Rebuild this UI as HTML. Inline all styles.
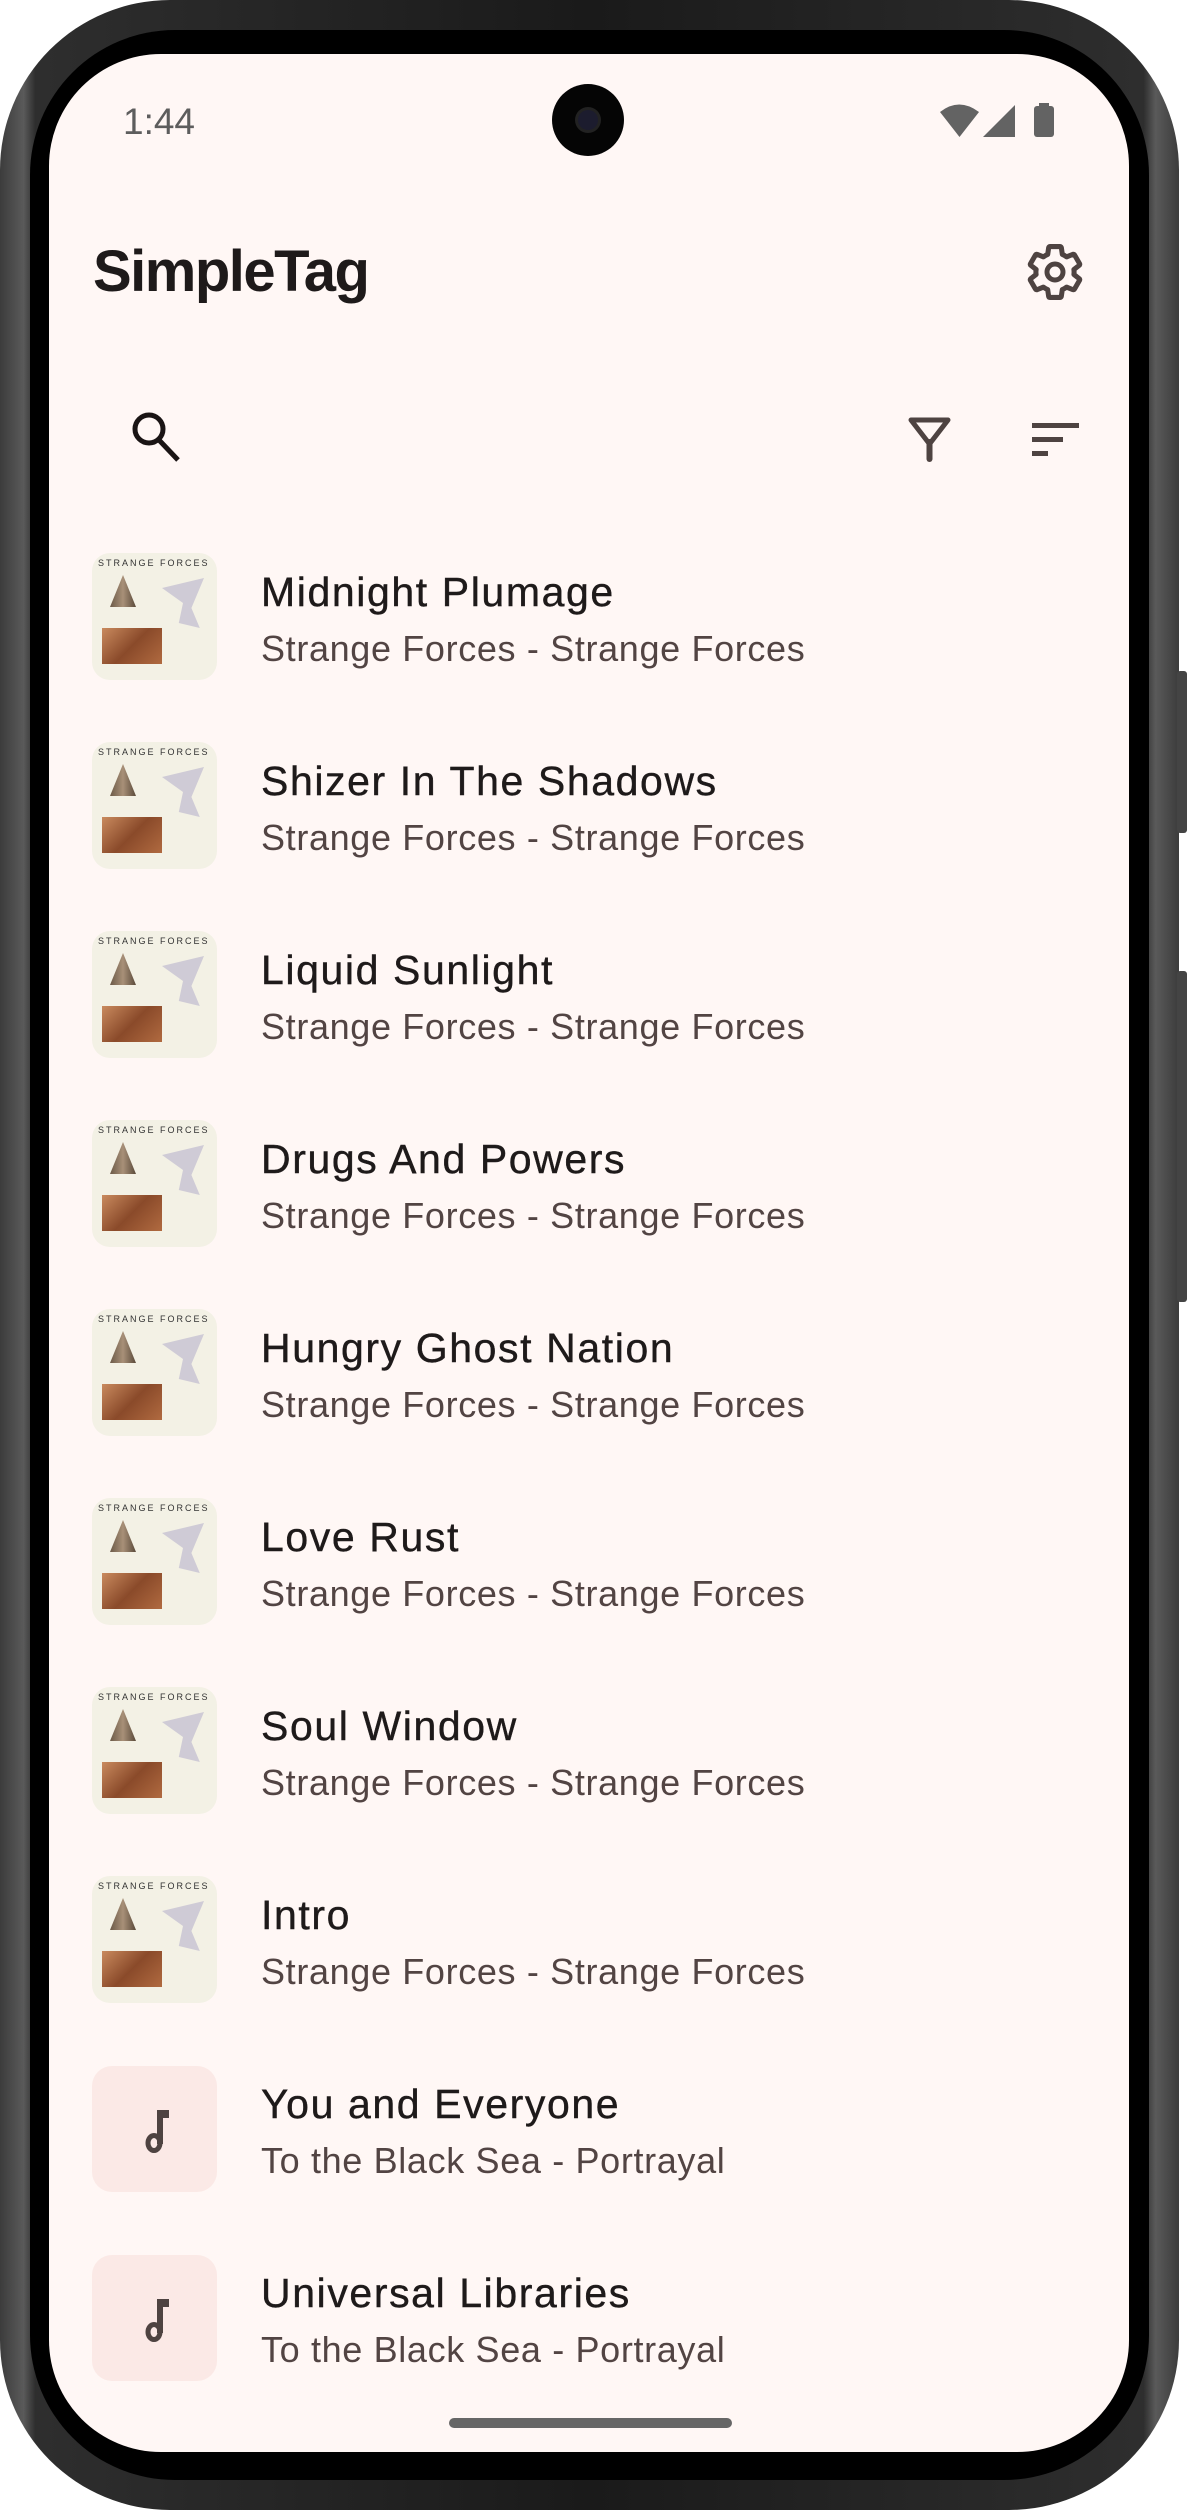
<!DOCTYPE html>
<html><head><meta charset="utf-8"><style>
*{margin:0;padding:0;box-sizing:border-box}
html,body{width:1187px;height:2513px;background:#fff;overflow:hidden;font-family:"Liberation Sans",sans-serif}
.body{position:absolute;left:0;top:0;width:1179px;height:2510px;border-radius:170px;background:linear-gradient(90deg,#3c3c3c,#5a5a5a 2%,#2e2e2e 3%,#1a1a1a 50%,#2e2e2e 97%,#5a5a5a 98%,#3c3c3c);}
.bezel{position:absolute;left:30px;top:30px;width:1119px;height:2450px;border-radius:145px;background:#000}
.screen{position:absolute;left:49px;top:54px;width:1080px;height:2398px;border-radius:112px;background:#fff7f5;overflow:hidden}
.btn{position:absolute;left:1177px;width:10px;background:#444;border-radius:3px}
.abs{position:absolute}
.title{position:absolute;left:212px;font-size:41px;line-height:41px;color:#1e1a1a;letter-spacing:1.6px;-webkit-text-stroke:0.4px #1e1a1a;white-space:nowrap}
.sub{position:absolute;left:212px;font-size:36px;line-height:36px;color:#524443;letter-spacing:0.65px;white-space:nowrap}
.art{position:absolute;left:43px;width:125px;height:127px;border-radius:18px;background:#f3f1e5;overflow:hidden}
.ph{position:absolute;left:43px;width:125px;height:126px;border-radius:20px;background:#fbe9e6}
</style></head><body>
<div class="body"></div>
<div class="btn" style="top:671px;height:162px"></div>
<div class="btn" style="top:971px;height:331px"></div>
<div class="bezel"></div>
<div class="screen">
  <div class="abs" style="left:74px;top:49px;font-size:37px;line-height:37px;color:#5d5d5d">1:44</div>
  <div class="abs" style="left:503px;top:30px;width:72px;height:72px;border-radius:50%;background:#050505"><div class="abs" style="left:26px;top:26px;width:20px;height:20px;border-radius:50%;background:#1c1c2e;box-shadow:0 0 0 3px #222"></div></div>
  <div class="abs" style="left:44px;top:189px;font-size:58px;line-height:58px;font-weight:bold;color:#1e1a1a;letter-spacing:-1.5px">SimpleTag</div>

  <div class="art" style="top:499px"><div class="abs" style="left:6px;top:5px;font-size:9px;letter-spacing:2px;color:#333">STRANGE FORCES</div><div class="abs" style="left:18px;top:22px;width:26px;height:32px;background:linear-gradient(90deg,#6b5a48,#a89078 50%,#5a4a3a);clip-path:polygon(50% 0,100% 100%,0 100%)"></div><div class="abs" style="left:70px;top:25px;width:42px;height:50px;background:#b8b2cc;opacity:.6;clip-path:polygon(0 20%,100% 0,70% 60%,90% 100%,40% 90%,50% 50%)"></div><div class="abs" style="left:10px;top:75px;width:60px;height:36px;background:linear-gradient(135deg,#c98a5e,#8a4a2a 50%,#b06a40)"></div></div>
  <div class="title" style="top:518px">Midnight Plumage</div><div class="sub" style="top:577px">Strange Forces - Strange Forces</div>

  <div class="art" style="top:688px"><div class="abs" style="left:6px;top:5px;font-size:9px;letter-spacing:2px;color:#333">STRANGE FORCES</div><div class="abs" style="left:18px;top:22px;width:26px;height:32px;background:linear-gradient(90deg,#6b5a48,#a89078 50%,#5a4a3a);clip-path:polygon(50% 0,100% 100%,0 100%)"></div><div class="abs" style="left:70px;top:25px;width:42px;height:50px;background:#b8b2cc;opacity:.6;clip-path:polygon(0 20%,100% 0,70% 60%,90% 100%,40% 90%,50% 50%)"></div><div class="abs" style="left:10px;top:75px;width:60px;height:36px;background:linear-gradient(135deg,#c98a5e,#8a4a2a 50%,#b06a40)"></div></div>
  <div class="title" style="top:707px">Shizer In The Shadows</div><div class="sub" style="top:766px">Strange Forces - Strange Forces</div>

  <div class="art" style="top:877px"><div class="abs" style="left:6px;top:5px;font-size:9px;letter-spacing:2px;color:#333">STRANGE FORCES</div><div class="abs" style="left:18px;top:22px;width:26px;height:32px;background:linear-gradient(90deg,#6b5a48,#a89078 50%,#5a4a3a);clip-path:polygon(50% 0,100% 100%,0 100%)"></div><div class="abs" style="left:70px;top:25px;width:42px;height:50px;background:#b8b2cc;opacity:.6;clip-path:polygon(0 20%,100% 0,70% 60%,90% 100%,40% 90%,50% 50%)"></div><div class="abs" style="left:10px;top:75px;width:60px;height:36px;background:linear-gradient(135deg,#c98a5e,#8a4a2a 50%,#b06a40)"></div></div>
  <div class="title" style="top:896px">Liquid Sunlight</div><div class="sub" style="top:955px">Strange Forces - Strange Forces</div>

  <div class="art" style="top:1066px"><div class="abs" style="left:6px;top:5px;font-size:9px;letter-spacing:2px;color:#333">STRANGE FORCES</div><div class="abs" style="left:18px;top:22px;width:26px;height:32px;background:linear-gradient(90deg,#6b5a48,#a89078 50%,#5a4a3a);clip-path:polygon(50% 0,100% 100%,0 100%)"></div><div class="abs" style="left:70px;top:25px;width:42px;height:50px;background:#b8b2cc;opacity:.6;clip-path:polygon(0 20%,100% 0,70% 60%,90% 100%,40% 90%,50% 50%)"></div><div class="abs" style="left:10px;top:75px;width:60px;height:36px;background:linear-gradient(135deg,#c98a5e,#8a4a2a 50%,#b06a40)"></div></div>
  <div class="title" style="top:1085px">Drugs And Powers</div><div class="sub" style="top:1144px">Strange Forces - Strange Forces</div>

  <div class="art" style="top:1255px"><div class="abs" style="left:6px;top:5px;font-size:9px;letter-spacing:2px;color:#333">STRANGE FORCES</div><div class="abs" style="left:18px;top:22px;width:26px;height:32px;background:linear-gradient(90deg,#6b5a48,#a89078 50%,#5a4a3a);clip-path:polygon(50% 0,100% 100%,0 100%)"></div><div class="abs" style="left:70px;top:25px;width:42px;height:50px;background:#b8b2cc;opacity:.6;clip-path:polygon(0 20%,100% 0,70% 60%,90% 100%,40% 90%,50% 50%)"></div><div class="abs" style="left:10px;top:75px;width:60px;height:36px;background:linear-gradient(135deg,#c98a5e,#8a4a2a 50%,#b06a40)"></div></div>
  <div class="title" style="top:1274px">Hungry Ghost Nation</div><div class="sub" style="top:1333px">Strange Forces - Strange Forces</div>

  <div class="art" style="top:1444px"><div class="abs" style="left:6px;top:5px;font-size:9px;letter-spacing:2px;color:#333">STRANGE FORCES</div><div class="abs" style="left:18px;top:22px;width:26px;height:32px;background:linear-gradient(90deg,#6b5a48,#a89078 50%,#5a4a3a);clip-path:polygon(50% 0,100% 100%,0 100%)"></div><div class="abs" style="left:70px;top:25px;width:42px;height:50px;background:#b8b2cc;opacity:.6;clip-path:polygon(0 20%,100% 0,70% 60%,90% 100%,40% 90%,50% 50%)"></div><div class="abs" style="left:10px;top:75px;width:60px;height:36px;background:linear-gradient(135deg,#c98a5e,#8a4a2a 50%,#b06a40)"></div></div>
  <div class="title" style="top:1463px">Love Rust</div><div class="sub" style="top:1522px">Strange Forces - Strange Forces</div>

  <div class="art" style="top:1633px"><div class="abs" style="left:6px;top:5px;font-size:9px;letter-spacing:2px;color:#333">STRANGE FORCES</div><div class="abs" style="left:18px;top:22px;width:26px;height:32px;background:linear-gradient(90deg,#6b5a48,#a89078 50%,#5a4a3a);clip-path:polygon(50% 0,100% 100%,0 100%)"></div><div class="abs" style="left:70px;top:25px;width:42px;height:50px;background:#b8b2cc;opacity:.6;clip-path:polygon(0 20%,100% 0,70% 60%,90% 100%,40% 90%,50% 50%)"></div><div class="abs" style="left:10px;top:75px;width:60px;height:36px;background:linear-gradient(135deg,#c98a5e,#8a4a2a 50%,#b06a40)"></div></div>
  <div class="title" style="top:1652px">Soul Window</div><div class="sub" style="top:1711px">Strange Forces - Strange Forces</div>

  <div class="art" style="top:1822px"><div class="abs" style="left:6px;top:5px;font-size:9px;letter-spacing:2px;color:#333">STRANGE FORCES</div><div class="abs" style="left:18px;top:22px;width:26px;height:32px;background:linear-gradient(90deg,#6b5a48,#a89078 50%,#5a4a3a);clip-path:polygon(50% 0,100% 100%,0 100%)"></div><div class="abs" style="left:70px;top:25px;width:42px;height:50px;background:#b8b2cc;opacity:.6;clip-path:polygon(0 20%,100% 0,70% 60%,90% 100%,40% 90%,50% 50%)"></div><div class="abs" style="left:10px;top:75px;width:60px;height:36px;background:linear-gradient(135deg,#c98a5e,#8a4a2a 50%,#b06a40)"></div></div>
  <div class="title" style="top:1841px">Intro</div><div class="sub" style="top:1900px">Strange Forces - Strange Forces</div>

  <div class="ph" style="top:2012px"><svg class="abs" style="left:42px;top:40px" width="40" height="48" viewBox="0 0 40 48"><rect x="23" y="4" width="6" height="34" fill="#4e4341"/><rect x="23" y="4" width="12" height="8" fill="#4e4341"/><ellipse cx="20" cy="37" rx="6" ry="7.5" fill="none" stroke="#4e4341" stroke-width="5"/></svg></div>
  <div class="title" style="top:2030px">You and Everyone</div><div class="sub" style="top:2089px">To the Black Sea - Portrayal</div>

  <div class="ph" style="top:2201px"><svg class="abs" style="left:42px;top:40px" width="40" height="48" viewBox="0 0 40 48"><rect x="23" y="4" width="6" height="34" fill="#4e4341"/><rect x="23" y="4" width="12" height="8" fill="#4e4341"/><ellipse cx="20" cy="37" rx="6" ry="7.5" fill="none" stroke="#4e4341" stroke-width="5"/></svg></div>
  <div class="title" style="top:2219px">Universal Libraries</div><div class="sub" style="top:2278px">To the Black Sea - Portrayal</div>

  <div class="abs" style="left:400px;top:2364px;width:283px;height:10px;border-radius:5px;background:#666"></div>
</div>
<svg class="abs" style="left:0;top:0" width="1187" height="520" viewBox="0 0 1187 520">
  <path d="M940 112 Q959 97 979 112 L959.5 137 Z" fill="#636363"/>
  <path d="M1015 105 L1015 137 L983 137 Z" fill="#636363"/>
  <rect x="1034" y="106" width="20" height="31" rx="3" fill="#636363"/><rect x="1039" y="103" width="10" height="4" fill="#636363"/>
  <path fill="none" stroke="#4e4341" stroke-width="1.9" stroke-linejoin="round" transform="translate(1055 272) scale(2.65) translate(-12 -12)" d="M19.14 12.94c.04-.3.06-.61.06-.94 0-.32-.02-.64-.07-.94l2.03-1.58c.18-.14.23-.41.12-.61l-1.92-3.32c-.12-.22-.37-.29-.59-.22l-2.39.96c-.5-.38-1.03-.7-1.620-.94l-.36-2.54c-.04-.24-.24-.41-.48-.41h-3.84c-.24 0-.43.17-.47.41l-.36 2.54c-.59.24-1.13.57-1.62.94l-2.39-.96c-.22-.08-.47 0-.59.22L2.74 8.87c-.12.21-.08.47.12.61l2.03 1.58c-.05.3-.09.63-.09.94s.02.64.07.94l-2.03 1.58c-.18.14-.23.41-.12.61l1.920 3.32c.12.22.37.29.59.22l2.39-.96c.5.38 1.03.7 1.62.94l.36 2.54c.05.24.24.41.48.41h3.84c.24 0 .44-.17.47-.41l.36-2.54c.59-.24 1.13-.56 1.62-.94l2.39.96c.22.08.47 0 .59-.22l1.92-3.32c.12-.22.07-.47-.12-.61l-2.01-1.58z"/>
  <circle cx="1055" cy="272" r="8" fill="none" stroke="#4e4341" stroke-width="5"/>
  <circle cx="149" cy="429" r="14" fill="none" stroke="#1a1414" stroke-width="5"/>
  <line x1="159" y1="440" x2="178" y2="460" stroke="#1a1414" stroke-width="5"/>
  <path d="M911 420 L948 420 L929.5 444 Z" fill="none" stroke="#4e4341" stroke-width="5" stroke-linejoin="round"/>
  <line x1="929.5" y1="442" x2="929.5" y2="459" stroke="#4e4341" stroke-width="6" stroke-linecap="round"/>
  <rect x="1032" y="423" width="47" height="5" fill="#4e4341"/>
  <rect x="1032" y="437" width="31" height="5" fill="#4e4341"/>
  <rect x="1032" y="451" width="16" height="5" fill="#4e4341"/>
</svg>
</body></html>
